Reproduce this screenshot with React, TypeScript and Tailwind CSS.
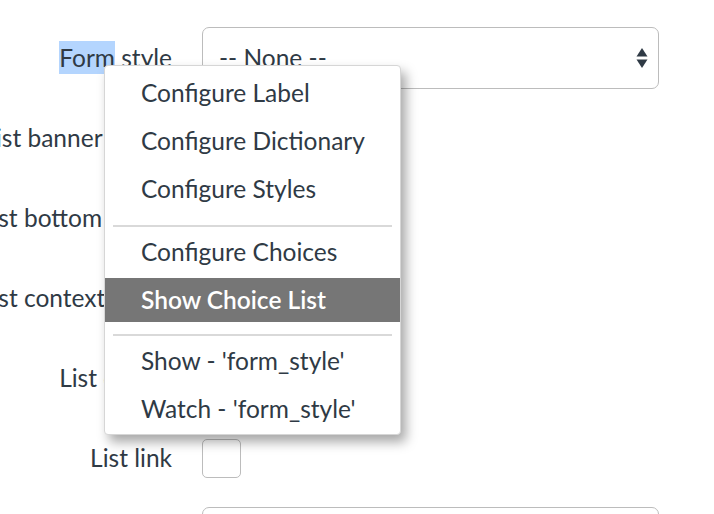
import React from "react";

const font = { fontFamily: "Lato, 'Noto Sans', sans-serif" };

type Row = { label: React.ReactNode; control: "select" | "none" | "checkbox" | "input" };

const rows: Row[] = [
  {
    label: (
      <>
        <span className="bg-[#b4d5fe] inline-block leading-[33px]">Form</span> style
      </>
    ),
    control: "select",
  },
  { label: "List banner image", control: "none" },
  { label: "List bottom image", control: "none" },
  { label: "List context menu", control: "none" },
  {
    label: (
      <>
        List <span className="tracking-[-1px]">control</span>
      </>
    ),
    control: "none",
  },
  { label: "List link", control: "checkbox" },
  { label: "List title", control: "input" },
];

function Control({ kind }: { kind: Row["control"] }) {
  if (kind === "select") {
    return (
      <div className="w-[457px] h-[62px] rounded-[7px] border-[1.5px] border-[#bcbcbc] flex items-center justify-between pl-[16px] pr-[10px]">
        <span>-- None --</span>
        <svg width="12" height="22" viewBox="0 0 12 22" className="text-[#2f3a45]">
          <path d="M6 1 L11.5 9.5 L0.5 9.5 Z" fill="currentColor" />
          <path d="M6 21 L11.5 12.5 L0.5 12.5 Z" fill="currentColor" />
        </svg>
      </div>
    );
  }
  if (kind === "checkbox") {
    return <div className="w-[39px] h-[39px] rounded-[5px] border-[1.5px] border-[#bcbcbc]" />;
  }
  if (kind === "input") {
    return <div className="w-[457px] h-[62px] rounded-[7px] border-[1.5px] border-[#bcbcbc]" />;
  }
  return null;
}

type Item = { text: string; active?: boolean } | { sep: string };

const items: Item[] = [
  { text: "Configure Label" },
  { text: "Configure Dictionary" },
  { text: "Configure Styles" },
  { sep: "mt-[10px]" },
  { text: "Configure Choices" },
  { text: "Show Choice List", active: true },
  { sep: "mt-[8px]" },
  { text: "Show - 'form_style'" },
  { text: "Watch - 'form_style'" },
];

function ContextMenu() {
  return (
    <div className="absolute left-[104px] top-[65px] w-[297px] rounded-[4px] bg-white border border-[#d6d6d6] shadow-[5px_7px_12px_rgba(0,0,0,0.35)] pt-[5px] pb-[3px] flex flex-col gap-[4px]">
      {items.map((it, i) =>
        "sep" in it ? (
          <div key={i} className={"mx-[8px] mb-[-1px] h-[2px] bg-[#d9d9d9] " + it.sep} />
        ) : (
          <div
            key={i}
            className={
              "h-[44px] flex items-center pl-[36px] " +
              (it.active ? "bg-[#767676] text-white font-semibold" : "")
            }
          >
            {it.text}
          </div>
        )
      )}
    </div>
  );
}

export default function App() {
  return (
    <div
      className="relative w-[714px] h-[514px] overflow-hidden bg-white text-[#2f3a45] text-[24.5px]"
      style={font}
    >
      <div className="flex flex-col gap-[18px] pt-[27px]">
        {rows.map((r, i) => (
          <div key={i} className="flex items-center h-[62px] shrink-0">
            <div className="w-[172px] shrink-0 flex justify-end">
              <span className="whitespace-nowrap shrink-0">{r.label}</span>
            </div>
            <div className="ml-[30px]">
              <Control kind={r.control} />
            </div>
          </div>
        ))}
      </div>
      <ContextMenu />
    </div>
  );
}
